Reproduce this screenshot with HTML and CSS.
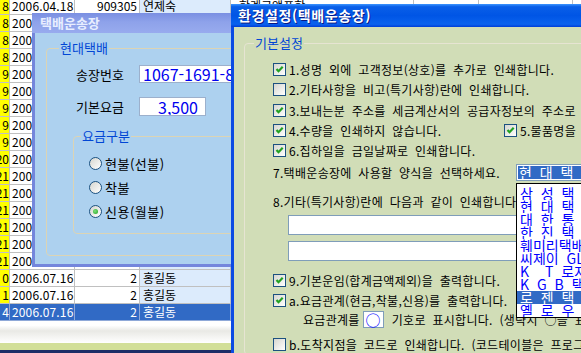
FILE: index.html
```html
<!DOCTYPE html>
<html lang="ko">
<head>
    <meta charset="UTF-8">
    <title>택배운송장</title>
    <link rel="stylesheet" href="styles.css">
</head>
<body>

<div class="app">
    <div class="grid">
        <div class="row"><span class="no">8</span><span class="date">2006.04.18</span><span class="num">909305</span><span class="name">연제숙</span><span class="addr">합계금액포함</span><span></span><span></span><span></span></div>
        <div class="row"><span class="no">8</span><span class="date">2006.05.02</span><span class="num">909311</span><span class="name">김민수</span><span class="addr"></span><span></span><span></span><span></span></div>
        <div class="row"><span class="no">8</span><span class="date">2006.05.02</span><span class="num">909312</span><span class="name">박정희</span><span class="addr"></span><span></span><span></span><span></span></div>
        <div class="row"><span class="no">8</span><span class="date">2005.12.20</span><span class="num">909210</span><span class="name">이영호</span><span class="addr"></span><span></span><span></span><span></span></div>
        <div class="row"><span class="no">9</span><span class="date">2004.11.08</span><span class="num">908102</span><span class="name">최수진</span><span class="addr"></span><span></span><span></span><span></span></div>
        <div class="row"><span class="no">9</span><span class="date">2006.05.10</span><span class="num">909320</span><span class="name">정대현</span><span class="addr"></span><span></span><span></span><span></span></div>
        <div class="row"><span class="no">9</span><span class="date">2003.07.15</span><span class="num">907011</span><span class="name">강은희</span><span class="addr"></span><span></span><span></span><span></span></div>
        <div class="row"><span class="no">9</span><span class="date">2006.05.11</span><span class="num">909321</span><span class="name">조현우</span><span class="addr"></span><span></span><span></span><span></span></div>
        <div class="row"><span class="no">9</span><span class="date">2006.05.12</span><span class="num">909322</span><span class="name">윤서연</span><span class="addr"></span><span></span><span></span><span></span></div>
        <div class="row"><span class="no">20</span><span class="date">2006.06.01</span><span class="num">909401</span><span class="name">장미경</span><span class="addr"></span><span></span><span></span><span></span></div>
        <div class="row"><span class="no">21</span><span class="date">2003.02.14</span><span class="num">906512</span><span class="name">임재원</span><span class="addr"></span><span></span><span></span><span></span></div>
        <div class="row"><span class="no">21</span><span class="date">2006.06.03</span><span class="num">909403</span><span class="name">한지민</span><span class="addr"></span><span></span><span></span><span></span></div>
        <div class="row"><span class="no">21</span><span class="date">2003.03.21</span><span class="num">906533</span><span class="name">오승철</span><span class="addr"></span><span></span><span></span><span></span></div>
        <div class="row"><span class="no">21</span><span class="date">2006.06.05</span><span class="num">909405</span><span class="name">서경아</span><span class="addr"></span><span></span><span></span><span></span></div>
        <div class="row"><span class="no">21</span><span class="date">2006.06.07</span><span class="num">909407</span><span class="name">신동욱</span><span class="addr"></span><span></span><span></span><span></span></div>
        <div class="row"><span class="no">21</span><span class="date">2003.04.02</span><span class="num">906540</span><span class="name">권혜진</span><span class="addr"></span><span></span><span></span><span></span></div>
        <div class="row"><span class="no">0</span><span class="date">2006.07.16</span><span class="num">2</span><span class="name">홍길동</span><span class="addr"></span><span></span><span></span><span></span></div>
        <div class="row"><span class="no">1</span><span class="date">2006.07.16</span><span class="num">2</span><span class="name">홍길동</span><span class="addr"></span><span></span><span></span><span></span></div>
        <div class="row sel"><span class="no">4</span><span class="date">2006.07.16</span><span class="num">2</span><span class="name">홍길동</span><span class="addr"></span><span></span><span></span><span></span></div>
    </div>
    <div class="foot"></div>
    <div class="status"></div>
    <div class="taskbar"></div>

    <!-- 택배운송장 (inactive) -->
    <div class="win win-left">
        <div class="win-title">택배운송장</div>
        <div class="win-body">
            <fieldset class="group group-outer">
                <legend>현대택배</legend>
                <div class="outer-body">
                    <div class="field field-first"><label>송장번호</label><input class="txt txt-wide" type="text" value="1067-1691-8"></div>
                    <div class="field field-second"><label>기본요금</label><input class="txt txt-short" type="text" value="3,500"></div>
                    <fieldset class="group group-fee">
                        <legend>요금구분</legend>
                        <div class="fee-body">
                            <div class="opt"><span class="radio"></span>현불(선불)</div>
                            <div class="opt"><span class="radio"></span>착불</div>
                            <div class="opt"><span class="radio on"></span>신용(월불)</div>
                        </div>
                    </fieldset>
                </div>
            </fieldset>
        </div>
    </div>

    <!-- 환경설정 (active) -->
    <div class="win win-right">
        <div class="win-title">환경설정(택배운송장)</div>
        <div class="win-body">
            <fieldset class="group group-basic">
                <legend>기본설정</legend>
                <div class="basic-body">
                    <div class="line"><span class="chk"><svg viewBox="0 0 11 11"><path d="M2.5 5 L4.5 7.2 L8.7 2.8"/></svg></span>1.성명 외에 고객정보(상호)를 추가로 인쇄합니다.</div>
                    <div class="line"><span class="chk"></span>2.기타사항을 비고(특기사항)란에 인쇄합니다.</div>
                    <div class="line l3"><span class="chk"><svg viewBox="0 0 11 11"><path d="M2.5 5 L4.5 7.2 L8.7 2.8"/></svg></span>3.보내는분 주소를 세금계산서의 공급자정보의 주소로 인쇄합니다.</div>
                    <div class="line">
                        <span class="pair"><span class="chk"><svg viewBox="0 0 11 11"><path d="M2.5 5 L4.5 7.2 L8.7 2.8"/></svg></span>4.수량을 인쇄하지 않습니다.</span>
                        <span class="chk"><svg viewBox="0 0 11 11"><path d="M2.5 5 L4.5 7.2 L8.7 2.8"/></svg></span>5.물품명을 인쇄하지 않습니다.
                    </div>
                    <div class="line"><span class="chk"><svg viewBox="0 0 11 11"><path d="M2.5 5 L4.5 7.2 L8.7 2.8"/></svg></span>6.집하일을 금일날짜로 인쇄합니다.</div>
                    <div class="line l7"><span class="q7">7.택배운송장에 사용할 양식을 선택하세요.</span><span class="combo"><span class="combo-val">현 대 택 배</span></span></div>
                    <div class="line l8">8.기타(특기사항)란에 다음과 같이 인쇄합니다.</div>
                    <input class="memo memo-first" type="text">
                    <input class="memo memo-second" type="text">
                    <div class="line l9"><span class="chk"><svg viewBox="0 0 11 11"><path d="M2.5 5 L4.5 7.2 L8.7 2.8"/></svg></span>9.기본운임(합계금액제외)을 출력합니다.</div>
                    <div class="line"><span class="chk"><svg viewBox="0 0 11 11"><path d="M2.5 5 L4.5 7.2 L8.7 2.8"/></svg></span>a.요금관계(현금,착불,신용)를 출력합니다.</div>
                    <div class="line lmark"><span class="mark-lead">요금관계를</span><span class="mark">○</span>기호로 표시합니다. (생략시 ○을 표시합니다)</div>
                    <div class="line lb"><span class="chk"></span>b.도착지점을 코드로 인쇄합니다. (코드테이블은 프로그램에서 설정)</div>
                </div>
            </fieldset>
        </div>

        <div class="droplist">
            <div>삼 성 택 배</div>
            <div>현 대 택 배</div>
            <div>대 한 통 운</div>
            <div>한 진 택 배</div>
            <div>훼미리택배</div>
            <div>씨제이 GLS</div>
            <div>K  T 로지스</div>
            <div>K G B 택배</div>
            <div class="hl">로 젠 택 배</div>
            <div>옐 로 우 캡</div>
        </div>
    </div>
</div>

</body>
</html>
```

FILE: styles.css
```css
* {
    box-sizing: border-box;
}
body {
    margin: 0;
    background: #fff;
    color: #000;
    font-family: "Noto Sans CJK KR", sans-serif;
    font-size: 12px;
    word-spacing: 3px;
}
.app {
    position: relative;
    width: 581px;
    height: 353px;
    overflow: hidden;
}

/* background list */
.grid {
    margin-top: -2px;
}
.row {
    display: grid;
    grid-template-columns: 9px 64px 64px 90px 182px 64px 93px 1fr;
    column-gap: 1px;
    height: 17px;
    padding-bottom: 1px;
    background: #c0c0c0;
}
.row span {
    background: #fff;
    line-height: 16px;
    white-space: nowrap;
    overflow: hidden;
}
.row .no {
    display: flex;
    justify-content: flex-end;
    background: #ffff00;
}
.row .date {
    padding-left: 2px;
    letter-spacing: 0.15px;
}
.row .num {
    text-align: right;
    padding-right: 2px;
}
.row .name {
    background: #dcebfc;
    padding-left: 3px;
}
.row .addr {
    padding-left: 8px;
}
.row.sel {
    background: #8fa9d8;
}
.row.sel span {
    background: #316ac5;
    color: #fff;
}
.foot {
    height: 22px;
    background: linear-gradient(#fff 0%, #fff 20%, #e9e9e5 45%, #f5f5f3 75%, #fff 100%);
}
.status {
    height: 7px;
    background: #d2df98;
}
.taskbar {
    height: 6px;
    background: #1d2d66;
}

/* windows */
.win {
    position: absolute;
    overflow: hidden;
}
.win-title {
    white-space: nowrap;
    font-weight: bold;
}
.win-left {
    left: 32px;
    top: 13px;
    width: 260px;
    height: 254px;
}
.win-left .win-title {
    height: 20px;
    line-height: 20px;
    padding-left: 8px;
    font-size: 13px;
    color: #e8eeff;
    background: linear-gradient(#7a8fe2, #8ea2ea 45%, #98abee);
}
.win-left .win-body {
    height: 234px;
    background: #add1ef;
    border-left: 3px solid #7486dc;
    border-bottom: 3px solid #7486dc;
    padding-top: 8px;
    padding-left: 11px;
}
.win-right {
    left: 231px;
    top: 4px;
    width: 380px;
    height: 360px;
}
.win-right .win-title {
    height: 23px;
    line-height: 23px;
    padding-left: 7px;
    font-size: 14px;
    letter-spacing: 0.6px;
    color: #fff;
    text-shadow: 1px 1px #0a1883;
    background: linear-gradient(#3d95ff 0%, #0a5fe8 12%, #0055e5 50%, #0a62ee 88%, #003dd7 100%);
}
.win-right .win-body {
    height: 337px;
    background: #d1ddb7;
    border-left: 3px solid #0b4be3;
    padding-top: 9px;
    padding-left: 10px;
}

/* group boxes */
.group {
    margin: 0;
    padding: 0;
    min-width: 0;
    border: 1px solid #dcd4b4;
    border-radius: 4px;
}
.group legend {
    padding: 0 1px;
    line-height: 14px;
    font-size: 13px;
    color: #0046d5;
}
.group-outer {
    width: 300px;
}
.group-outer legend {
    margin-left: 12px;
}
.outer-body {
    padding: 0 0 21px 26px;
    font-size: 13px;
}
.field {
    display: flex;
    align-items: center;
    padding-left: 3px;
}
.field label {
    width: 63px;
    flex: none;
}
.field-first {
    margin-top: 10px;
    height: 18px;
}
.field-second {
    margin-top: 14px;
    height: 19px;
}
.txt {
    height: 100%;
    margin: 0;
    border: 1px solid #9cb0cc;
    background: #fff;
    color: #0000ee;
    font-family: inherit;
    font-size: 16px;
    outline: none;
}
.txt-wide {
    width: 160px;
    flex: none;
    padding: 0 3px;
}
.txt-short {
    width: 67px;
    padding: 0 7px 0 0;
    text-align: right;
}
.group-fee {
    width: 300px;
    margin-top: 13px;
}
.group-fee legend {
    margin-left: 7px;
}
.fee-body {
    padding: 8px 0 10px 15px;
}
.opt {
    display: flex;
    align-items: center;
    height: 24px;
    letter-spacing: 0.5px;
}
.radio {
    position: relative;
    width: 13px;
    height: 13px;
    margin-right: 3px;
    border: 1px solid #1c5180;
    border-radius: 50%;
    background: linear-gradient(135deg, #d6d6cf, #fff);
}
.radio.on::after {
    content: "";
    position: absolute;
    left: 3px;
    top: 3px;
    width: 5px;
    height: 5px;
    border-radius: 50%;
    background: radial-gradient(circle at 40% 40%, #7de07a, #21a121);
}

/* settings */
.group-basic {
    width: 400px;
    border-color: #e6e4d2;
}
.group-basic legend {
    margin-left: 9px;
}
.basic-body {
    padding: 9px 0 0 28px;
    letter-spacing: 0.3px;
}
.line {
    display: flex;
    align-items: center;
    height: 20px;
    white-space: nowrap;
}
.chk {
    flex: none;
    width: 13px;
    height: 13px;
    margin-right: 3px;
    border: 1px solid #1c5180;
    background: linear-gradient(135deg, #d6d6cf, #fff);
}
.chk svg {
    display: block;
    width: 11px;
    height: 11px;
}
.chk path {
    fill: none;
    stroke: #21a121;
    stroke-width: 2.2;
}
.pair {
    display: flex;
    align-items: center;
    width: 231px;
    flex: none;
}
.l3 {
    margin-top: 1px;
}
.l7 {
    height: 21px;
    margin-top: 2px;
}
.q7 {
    width: 243px;
    flex: none;
}
.combo {
    width: 80px;
    height: 17px;
    flex: none;
    padding: 1px;
    border: 1px solid #7f9db9;
    background: #fff;
    letter-spacing: 0;
}
.combo-val {
    display: block;
    height: 13px;
    line-height: 13px;
    padding-left: 1px;
    font-size: 14px;
    word-spacing: 4px;
    white-space: pre;
    overflow: hidden;
    color: #fff;
    background: #316ac5;
}
.l8 {
    margin-top: 8px;
}
.memo {
    display: block;
    width: 300px;
    height: 20px;
    margin: 0 0 0 15px;
    border: 1px solid #7f9db9;
    background: #fff;
}
.memo-first {
    margin-top: 4px;
}
.memo-second {
    margin-top: 6px;
}
.l9 {
    margin-top: 9px;
}
.lmark {
    height: 18px;
}
.mark-lead {
    margin-left: 30px;
}
.mark {
    width: 21px;
    height: 17px;
    flex: none;
    margin: 0 8px 0 3px;
    border: 1px solid #7f9db9;
    background: #fff;
    color: #0000ff;
    font-size: 15px;
    line-height: 15px;
    text-align: center;
}
.lb {
    margin-top: 6px;
}

/* open combo list */
.droplist {
    position: absolute;
    left: 285px;
    top: 179px;
    width: 90px;
    padding-top: 3px;
    border: 1px solid #000;
    background: #fff;
}
.droplist div {
    height: 13px;
    line-height: 13px;
    padding-left: 3px;
    font-size: 14px;
    word-spacing: 4px;
    color: #0000ff;
    white-space: pre;
    overflow: hidden;
}
.droplist .hl {
    background: #316ac5;
    color: #fff;
}
```
